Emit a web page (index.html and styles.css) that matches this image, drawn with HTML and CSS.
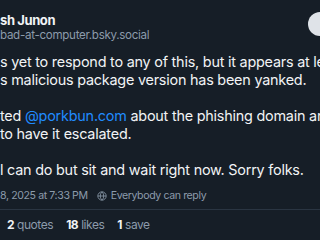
FILE: index.html
```html
<!DOCTYPE html>
<html lang="en">
<head>
    <meta charset="UTF-8">
    <meta name="viewport" content="width=device-width, initial-scale=1.0">
    <title>Post</title>
    <link rel="stylesheet" href="styles.css">
</head>
<body>
    <div class="post">
        <div class="header">
            <div class="author">
                <div class="name">sh Junon</div>
                <div class="handle">bad-at-computer.bsky.social</div>
            </div>
            <div class="follow"></div>
        </div>

        <div class="text">
            <p>s yet to respond to any of this, but it appears at least<br>s malicious package version has been yanked.</p>
            <p>ted <a href="#">@porkbun.com</a> about the phishing domain and<br>to have it escalated.</p>
            <p>l can do but sit and wait right now. Sorry folks.</p>
        </div>

        <div class="meta">
            <span>8, 2025 at 7:33 PM</span>
            <span class="reply">
                <svg viewBox="0 0 24 24" width="10" height="10" fill="none" stroke="currentColor" stroke-width="2">
                    <circle cx="12" cy="12" r="10"/>
                    <path d="M2 12h20M12 2c3 3 4 6.5 4 10s-1 7-4 10c-3-3-4-6.5-4-10s1-7 4-10z"/>
                </svg>
                Everybody can reply
            </span>
        </div>

        <div class="stats">
            <span><b>2</b> quotes</span>
            <span><b>18</b> likes</span>
            <span><b>1</b> save</span>
        </div>
    </div>
</body>
</html>
```

FILE: styles.css
```css
body {
    margin: 0;
    background: #161e27;
    font-family: Inter, "Noto Sans", sans-serif;
    color: #f1f3f5;
    overflow: hidden;
    white-space: nowrap;
}

.post {
    width: 320px;
}

/* Header */
.header {
    display: flex;
    align-items: flex-start;
    padding-top: 12px;
}

.author {
    flex: 1;
}

.name {
    font-size: 13px;
    font-weight: 700;
    line-height: 17px;
    letter-spacing: -0.4px;
}

.handle {
    font-size: 11.6px;
    line-height: 13px;
    letter-spacing: -0.3px;
    color: #8c9bab;
}

.follow {
    width: 60px;
    height: 24px;
    margin-right: -48px;
    border-radius: 12px;
    background: #dfe3e8;
}

/* Body text */
.text {
    margin-top: 11px;
    font-size: 14.4px;
    line-height: 18px;
    letter-spacing: -0.22px;
}

.text p {
    margin: 0 0 18px;
}

.text p:last-child {
    margin-bottom: 0;
}

.text a {
    color: #208bfe;
    text-decoration: none;
}

/* Meta line */
.meta {
    display: flex;
    align-items: center;
    gap: 9px;
    margin-top: 10px;
    font-size: 10.6px;
    line-height: 14px;
    letter-spacing: -0.4px;
    color: #8c9bab;
}

.reply {
    display: flex;
    align-items: center;
    gap: 4px;
}

/* Stats */
.stats {
    display: flex;
    gap: 13px;
    margin-top: 6px;
    padding: 7px 0 0 7px;
    border-top: 1px solid #2a3542;
    font-size: 12px;
    line-height: 16px;
    letter-spacing: -0.45px;
    color: #8c9bab;
}

.stats b {
    color: #f1f3f5;
}
```
